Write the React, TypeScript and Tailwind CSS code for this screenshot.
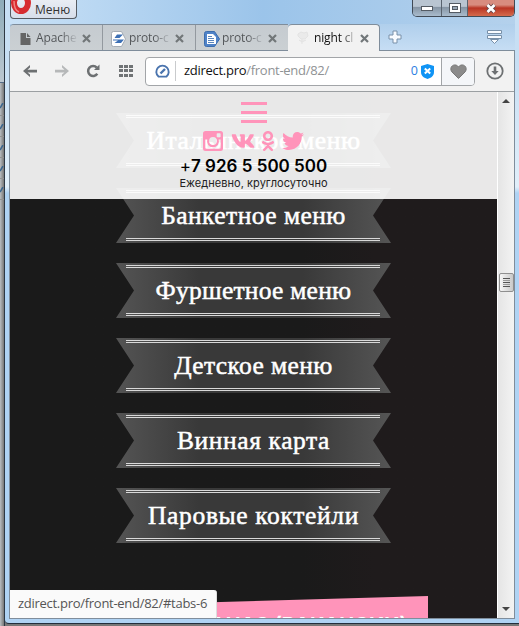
import { FaOdnoklassniki, FaTwitter, FaVk } from "react-icons/fa";

const ribbons = [
  { label: "Итальянское меню", tracking: "tracking-[0.600px]" },
  { label: "Банкетное меню", tracking: "tracking-[0.450px]" },
  { label: "Фуршетное меню", tracking: "tracking-[0.250px]" },
  { label: "Детское меню", tracking: "tracking-[0.400px]" },
  { label: "Винная карта", tracking: "tracking-[0.600px]" },
  { label: "Паровые коктейли", tracking: "tracking-[0.650px]" },
];

function CloseMark() {
  return (
    <svg width="9" height="9" viewBox="0 0 9 9" className="shrink-0">
      <path d="M1 1l7 7M8 1L1 8" stroke="#727779" strokeWidth="2.2" />
    </svg>
  );
}

function PageIcon() {
  return (
    <svg width="16" height="16" viewBox="0 0 16 16" className="shrink-0">
      <path d="M2.500 2H8v5h4.500v7h-10z" fill="#656565" />
      <path d="M9 2l3.500 4H9z" fill="#656565" />
    </svg>
  );
}

function ShipIcon() {
  return (
    <svg width="16" height="16" viewBox="0 0 16 16" className="shrink-0">
      <path d="M2.500.5h8l4 7.500-4 7.500h-8Q.5 15.500.5 13.500v-11Q.5.5 2.500.5z" fill="#fff" stroke="#a4acb5" />
      <path d="M6 3.500h6L8.500 7H3.500zM2 8.500h11l-3 3.500H3.500L7 9.500H2z" fill="#3d70b5" />
    </svg>
  );
}

function DocIcon() {
  return (
    <svg width="16" height="16" viewBox="0 0 16 16" className="shrink-0">
      <path d="M2.500.5h8l5 7.500-5 7.500h-8Q.5 15.500.5 13.500v-11Q.5.5 2.500.5z" fill="#5083c8" stroke="#3c6dad" />
      <path d="M3 3h6l3 3v7H3z" fill="#fff" />
      <path d="M4 5.500h4M4 7.500h6M4 9.500h6M4 11.500h6" stroke="#5b86bd" />
    </svg>
  );
}

function Rose() {
  return (
    <svg width="16" height="16" viewBox="0 0 16 16" className="shrink-0">
      <path d="M3 4l3-2 3 1 3-1 1 4-3 3-4 0-3-3zM7 9v5M4 10l3 2 4-2" fill="#eaeaea" stroke="#e3e3e3" />
    </svg>
  );
}

function Tab({ icon, title }: { icon: React.ReactNode; title: string }) {
  return (
    <div className="flex h-[27px] w-[93px] shrink-0 items-center border-r border-[#93999f] bg-linear-to-b from-[#c5cbd0] to-[#cbd0d3] pl-2">
      {icon}
      <span className="ml-[2px] w-[41px] bg-linear-to-r from-[#505356] from-60% to-[#c0c5ca] bg-clip-text pb-px text-[12px] tracking-[-0.150px] whitespace-nowrap text-transparent">
        {title}
      </span>
      <span className="ml-[5px] flex">
        <CloseMark />
      </span>
    </div>
  );
}

function TitleBar() {
  return (
    <div className="flex h-6 shrink-0 items-start justify-between bg-linear-to-r from-[#c9e1f6] via-[#9bc4ea] to-[#b4d1ec]">
      <div className="flex h-[19px] w-[67px] items-center overflow-hidden rounded-b-[4px] border border-t-0 border-[#555a61] bg-linear-to-b from-[#e9edf4] to-[#d7deea]">
        <svg width="22" height="18" viewBox="0 0 22 18" className="shrink-0">
          <ellipse cx="10" cy="3" rx="7" ry="8" fill="none" stroke="#d72c30" strokeWidth="6" />
          <path d="M3 1q0 9 5 11" fill="none" stroke="#f18480" strokeWidth="1.500" />
        </svg>
        <span className="ml-[2px] pt-px text-[12px] text-[#333]">Меню</span>
      </div>
      <div className="flex h-[17px] w-[103px] overflow-hidden rounded-b-[5px] border border-t-0 border-[#414a55]">
        <div className="flex w-[29px] items-center justify-center border-r border-[#59636e] bg-linear-to-b from-[#b9c5d1] from-40% via-[#8695a4] via-45% to-[#a9bbcc]">
          <i className="mt-[1px] h-[5px] w-[12px] border border-[#545b63] bg-white" />
        </div>
        <div className="flex w-[26px] items-center justify-center border-r border-[#59636e] bg-linear-to-b from-[#b9c5d1] from-40% via-[#8695a4] via-45% to-[#a9bbcc]">
          <i className="flex h-[10px] w-[12px] items-center justify-center border border-[#545b63] bg-white">
            <i className="h-[4px] w-[6px] border border-[#545b63] bg-[#9aa8b6]" />
          </i>
        </div>
        <div className="flex grow items-center justify-center bg-linear-to-b from-[#d88c7f] from-30% via-[#b93424] via-50% to-[#d46a4c]">
          <svg width="12" height="11" viewBox="0 0 12 11">
            <path d="M2.500 2l7 7M9.500 2l-7 7" stroke="#64464a" strokeWidth="4.500" />
            <path d="M2.500 2l7 7M9.500 2l-7 7" stroke="#fff" strokeWidth="2.700" />
          </svg>
        </div>
      </div>
    </div>
  );
}

function TabStrip() {
  return (
    <div className="flex h-[27px] shrink-0 bg-linear-to-b from-[#b0cfec] to-[#c7def4]">
      <div className="flex w-[278px] shrink-0 overflow-hidden rounded-tl-[4px] border-t border-b border-[#7f8d9b]">
        <Tab icon={<PageIcon />} title="Apache" />
        <Tab icon={<ShipIcon />} title="proto-c" />
        <Tab icon={<DocIcon />} title="proto-c" />
      </div>
      <div className="flex w-[92px] shrink-0 items-center rounded-t-[4px] border-t border-r border-[#7f8d9b] bg-[#f2f2f2] pl-[7px]">
        <Rose />
        <span className="ml-[3px] w-[41px] bg-linear-to-r from-[#111] from-65% to-[#ddd] bg-clip-text pb-px text-[12px] tracking-[-0.150px] whitespace-nowrap text-transparent">
          night cl
        </span>
        <span className="ml-[5px] flex">
          <CloseMark />
        </span>
      </div>
      <div className="flex grow items-center justify-between border-b border-[#7f8d9b] pr-3 pl-2">
        <svg width="14" height="14" viewBox="0 0 14 14">
          <path d="M5 1h4v4h4v4H9v4H5V9H1V5h4z" fill="#f8fbff" stroke="#7890a9" />
        </svg>
        <svg width="17" height="16" viewBox="0 0 17 16">
          <path d="M1.500 1.500h14v3h-14zM1.500 6.500h14v3h-14zM4.500 10.500h8l-4 4z" fill="#f8fbff" stroke="#7890a9" />
        </svg>
      </div>
    </div>
  );
}

function Toolbar() {
  return (
    <div className="flex h-[41px] shrink-0 items-center border-b border-[#9b9fa2] bg-[#f2f2f2] pl-[13px]">
      <svg width="15" height="12" viewBox="0 0 15 12">
        <path d="M7 0v2.500L4.500 4.800H14v2.600H4.500L7 9.600V12L0 6z" fill="#6d7072" />
      </svg>
      <svg width="15" height="12" viewBox="0 0 15 12" className="ml-4">
        <path d="M8 0v2.500l2.500 2.300H1v2.600h9.500L8 9.600V12l7-6z" fill="#b6b8b9" />
      </svg>
      <svg width="15" height="14" viewBox="0 0 15 14" className="ml-[17px]">
        <path d="M10.800 3.600A5 5 0 1 0 11.300 9.800" fill="none" stroke="#6d7072" strokeWidth="2.500" />
        <path d="M13.500.5V6H8z" fill="#6d7072" />
      </svg>
      <div className="ml-[18px] grid h-3 w-[14px] grid-cols-3 gap-px">
        {Array.from({ length: 9 }, (_, i) => (
          <i key={i} className="h-[3px] bg-[#707375]" />
        ))}
      </div>
      <div className="ml-3 flex h-[29px] w-[330px] items-center rounded-[4px] border border-[#a2a5a8] bg-white">
        <svg width="15" height="15" viewBox="0 0 15 15" className="ml-[9px] shrink-0">
          <path d="M3.500 12.600A6.200 6.200 0 1 1 11.500 12.600z" fill="none" stroke="#4a74ae" strokeWidth="1.900" />
          <path d="M5.500 9.500L10 5" stroke="#4a74ae" strokeWidth="2.400" />
        </svg>
        <i className="ml-[5px] h-[20px] w-px bg-[#c9cbcd]" />
        <span className="ml-2 grow text-[13px] tracking-[-0.280px] whitespace-nowrap text-[#8f9294]">
          <span className="text-[#111]">zdirect.pro</span>/front-end/82/
        </span>
        <span className="text-[12.500px] text-[#2b80e2]">0</span>
        <svg width="13" height="15" viewBox="0 0 12 15" preserveAspectRatio="none" className="mr-[7px] ml-[3px] shrink-0">
          <path d="M6 0l6 2v6c0 4-3 6-6 7-3-1-6-3-6-7V2z" fill="#1094f5" />
          <path d="M3.500 4.500l5 5M8.500 4.500l-5 5" stroke="#fff" strokeWidth="1.800" />
        </svg>
        <div className="flex h-full w-[33px] shrink-0 items-center justify-center rounded-r-[3px] border-l border-[#a2a5a8] bg-[#f4f6f9]">
          <svg width="17" height="15" viewBox="0 0 17 15">
            <path d="M8.500 14.500L2 8C-2 3 5-2 8.500 3 12-2 19 3 15 8z" fill="#8b8b8b" stroke="#777" />
          </svg>
        </div>
      </div>
      <svg width="18" height="18" viewBox="0 0 18 18" className="ml-[11px]">
        <circle cx="9" cy="9" r="7.700" fill="none" stroke="#6d7072" strokeWidth="1.800" />
        <path d="M7.700 4.500h2.600V9h2.400L9 13 5.300 9h2.400z" fill="#6d7072" />
      </svg>
    </div>
  );
}

function Ribbon({ label, tracking }: { label: string; tracking: string }) {
  return (
    <div className="flex h-[55px] w-[275px] shrink-0 flex-col justify-between bg-[linear-gradient(90deg,#545454,#393939_30%,#393939_68%,#555)] px-[10px] py-[2px] [clip-path:polygon(0_0,100%_0,calc(100%-18px)_50%,100%_100%,0_100%,18px_50%)]">
      <i className="mr-px h-[3px] border-y border-[#d9d9d9]" />
      <span className={`text-center font-['Liberation_Serif',serif] text-[25.500px] leading-[30px] whitespace-nowrap text-white [-webkit-text-stroke:0.500px_white] ${tracking}`}>
        {label}
      </span>
      <i className="mr-px h-[3px] border-y border-[#d9d9d9]" />
    </div>
  );
}

function StickyHeader() {
  return (
    <header className="absolute inset-x-0 top-0 flex h-[107px] flex-col items-center bg-white/90">
      <div className="mt-[10px] ml-px flex h-[21px] w-[26px] flex-col justify-between">
        <i className="h-[3px] bg-[#ff94ba]" />
        <i className="h-[3px] bg-[#ff94ba]" />
        <i className="h-[3px] bg-[#ff94ba]" />
      </div>
      <div className="mt-[7px] flex h-[21px] items-center pr-px text-[#ff94ba]">
        <svg width="20" height="20" viewBox="0 0 20 20">
          <path fillRule="evenodd" d="M2.500 0h15Q20 0 20 2.500v15Q20 20 17.500 20h-15Q0 20 0 17.500v-15Q0 0 2.500 0zM14.500 2.300q-.8 0-.8.8v2.300q0 .8.8.8h2.300q.8 0 .8-.8V3.100q0-.8-.8-.8zM2.300 8.500v8q0 1.200 1.200 1.200h13q1.200 0 1.200-1.200v-8h-2a6 6 0 1 1-11.400 0zM10 6.100a3.900 3.900 0 1 0 0 7.800 3.900 3.900 0 0 0 0-7.800z" fill="currentColor" />
        </svg>
        <FaVk className="ml-[8px] h-[24px] w-[24px]" />
        <FaOdnoklassniki className="ml-[5px] h-[20px] w-[16px]" />
        <FaTwitter className="ml-[6px] h-[22px] w-[22px]" />
      </div>
      <p className="mt-[5px] font-['Inter',sans-serif] text-[17px] leading-5 font-semibold whitespace-nowrap text-black">
        <span className="font-normal">+</span>7 926 5 500 500
      </p>
      <p className="font-['Inter',sans-serif] text-[11px] leading-[15px] tracking-[0.050px] whitespace-nowrap text-[#222]">
        Ежедневно, круглосуточно
      </p>
    </header>
  );
}

function ScrollBar() {
  return (
    <div className="flex w-[17px] shrink-0 flex-col items-center border-l border-white bg-linear-to-r from-[#e5e5e5] to-[#f3f3f3]">
      <i className="mt-[7px] border-x-[4px] border-b-[4px] border-x-transparent border-b-[#444]" />
      <div className="mt-[170px] flex h-[19px] w-[15px] flex-col items-center justify-center gap-px rounded-[2px] border border-[#8f8f8f] bg-linear-to-r from-[#f6f6f6] to-[#c9c9c9]">
        <i className="h-px w-[7px] bg-[#555]" />
        <i className="h-px w-[7px] bg-[#999]" />
        <i className="h-px w-[7px] bg-[#555]" />
        <i className="h-px w-[7px] bg-[#999]" />
        <i className="h-px w-[7px] bg-[#555]" />
      </div>
      <i className="mt-auto mb-[7px] border-x-[4px] border-t-[4px] border-x-transparent border-t-[#444]" />
    </div>
  );
}

export default function App() {
  return (
    <div className="flex h-[626px] w-[519px] overflow-hidden bg-[#777] font-['Open_Sans','Noto_Sans',sans-serif]">
      <div className="flex w-[5px] shrink-0 flex-col overflow-hidden border-r border-[#2d3844] bg-linear-to-r from-[#b9bec2] to-[#777]">
        <div className="h-[83px] shrink-0 border-b border-[#556b86] bg-linear-to-b from-[#8eacb9] to-[#bcc7d0]" />
        <div className="mt-5 flex flex-col">
          {[0, 1, 2, 3, 4].map((n) => (
            <svg key={n} width="4" height="21" viewBox="0 0 4 21" className="shrink-0">
              <path d="M0 12.500h4" stroke="#929292" />
              <path d="M0 5l3-5" stroke="#3b668e" strokeWidth="1.500" />
            </svg>
          ))}
        </div>
      </div>
      <div className="mb-[2px] flex min-w-0 grow flex-col rounded-bl-[4px] border-b border-[#222e3c] bg-linear-to-b from-[#c7dff4] from-10% via-[#e1effa] via-30% to-[#afd3f4] to-31% px-[5px] pr-[4px] pb-[4px]">
        <TitleBar />
        <TabStrip />
        <div className="-ml-px flex min-h-0 grow flex-col border-r border-b border-l border-[#7f8d9b]">
          <Toolbar />
          <div className="flex min-h-0 grow">
            <main className="relative flex min-w-0 grow flex-col items-center overflow-hidden bg-linear-to-r from-[#1a1a1a] from-60% to-[#1f1b1c] to-75% pt-[21px]">
              <div className="flex flex-col gap-5">
                {ribbons.map((r) => (
                  <Ribbon key={r.label} {...r} />
                ))}
              </div>
              <div className="mt-[53px] h-[30px] w-[349px] shrink-0 bg-[#ff94ba] pt-[17px] pr-[21px] text-right font-['Inter',sans-serif] text-[20px] leading-[24px] font-bold whitespace-nowrap text-white [clip-path:polygon(0_10px,100%_0,100%_100%,0_100%)]">
                У НАС (ВАКАНСИИ)
              </div>
              <StickyHeader />
              <div className="absolute bottom-0 left-0 flex h-7 w-[207px] items-center rounded-tr-[3px] border-r border-[#ddd] bg-[#fafafa] pl-2 text-[13px] tracking-[-0.280px] whitespace-nowrap text-[#555]">
                zdirect.pro/front-end/82/#tabs-6
              </div>
            </main>
            <ScrollBar />
          </div>
        </div>
      </div>
    </div>
  );
}
